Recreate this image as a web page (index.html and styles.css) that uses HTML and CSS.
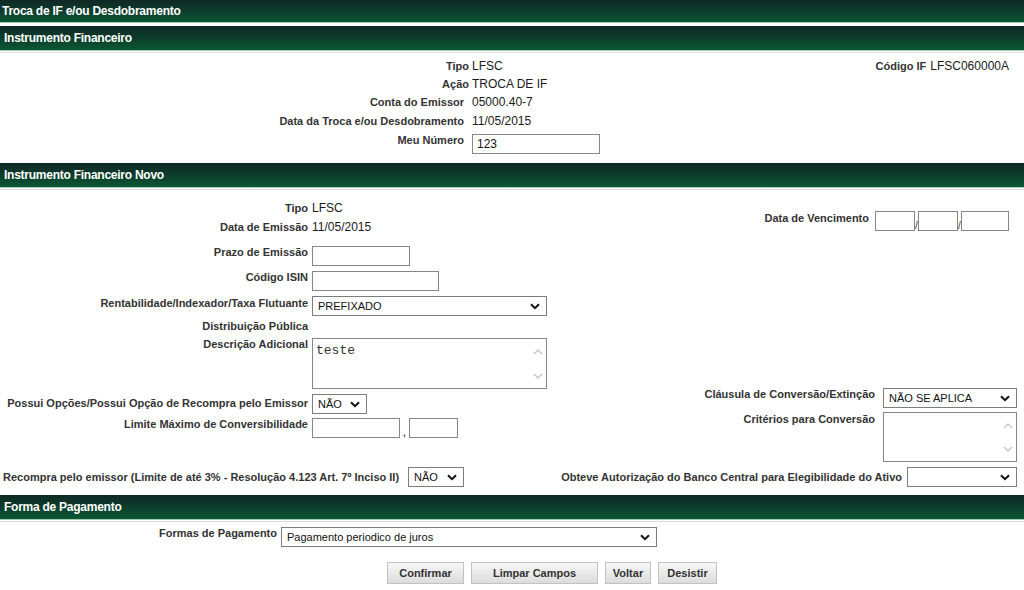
FILE: index.html
```html
<!DOCTYPE html>
<html lang="pt-BR">
<head>
<meta charset="utf-8">
<title>Troca de IF e/ou Desdobramento</title>
<link rel="stylesheet" href="styles.css">
</head>
<body>
<div class="title">Troca de IF e/ou Desdobramento</div>
<div class="bar">Instrumento Financeiro</div>
<section class="body body1">
  <div class="grid1">
    <div class="lbl lbl-tight">Tipo</div><div class="val">LFSC</div>
    <div class="lbl lbl-tight">Ação</div><div class="val">TROCA DE IF</div>
    <div class="lbl">Conta do Emissor</div><div class="val">05000.40-7</div>
    <div class="lbl">Data da Troca e/ou Desdobramento</div><div class="val">11/05/2015</div>
    <div class="lbl">Meu Número</div><div><input class="inp w-meu" value="123"></div>
  </div>
  <div class="codigo">
    <span class="lbl">Código IF</span><span class="val">LFSC060000A</span>
  </div>
</section>

<div class="bar">Instrumento Financeiro Novo</div>
<section class="body body2">
  <div class="cols">
    <div class="grid2">
      <div class="lbl">Tipo</div><div class="val">LFSC</div>
      <div class="lbl">Data de Emissão</div><div class="val">11/05/2015</div>
      <div class="lbl">Prazo de Emissão</div><div><input class="inp w-prazo"></div>
      <div class="lbl">Código ISIN</div><div><input class="inp w-isin"></div>
      <div class="lbl">Rentabilidade/Indexador/Taxa Flutuante</div>
      <div><div class="sel sel-m2 w-rent"><span>PREFIXADO</span><svg class="chev" viewBox="0 0 10 7"><path d="M1 1.2 L5 5.2 L9 1.2"/></svg></div></div>
      <div class="lbl">Distribuição Pública</div><div></div>
      <div class="lbl">Descrição Adicional</div>
      <div>
        <div class="tarea w-desc">
          <div class="tarea-text">teste</div>
          <div class="tarea-scroll">
            <svg class="sarrow" viewBox="0 0 10 6"><path d="M1 5 L5 1 L9 5"/></svg>
            <svg class="sarrow" viewBox="0 0 10 6"><path d="M1 1 L5 5 L9 1"/></svg>
          </div>
        </div>
      </div>
      <div class="lbl">Possui Opções/Possui Opção de Recompra pelo Emissor</div>
      <div><div class="sel w-nao"><span>NÃO</span><svg class="chev" viewBox="0 0 10 7"><path d="M1 1.2 L5 5.2 L9 1.2"/></svg></div></div>
      <div class="lbl">Limite Máximo de Conversibilidade</div>
      <div class="limite"><input class="inp w-lim1"><span class="comma">,</span><input class="inp w-lim2"></div>
    </div>

    <div class="right2">
      <div class="rrow venc">
        <span class="lbl lbl-r">Data de Vencimento</span>
        <div class="datebox">
          <input class="inp w-d1"><span class="slash">/</span><input class="inp w-d1"><span class="slash">/</span><input class="inp w-d3">
        </div>
      </div>
      <div class="rrow clausula">
        <span class="lbl lbl-r lbl-up">Cláusula de Conversão/Extinção</span>
        <div class="sel w-claus"><span>NÃO SE APLICA</span><svg class="chev" viewBox="0 0 10 7"><path d="M1 1.2 L5 5.2 L9 1.2"/></svg></div>
      </div>
      <div class="rrow criterios">
        <span class="lbl lbl-r">Critérios para Conversão</span>
        <div class="tarea w-crit">
          <div class="tarea-text"></div>
          <div class="tarea-scroll">
            <svg class="sarrow" viewBox="0 0 10 6"><path d="M1 5 L5 1 L9 5"/></svg>
            <svg class="sarrow" viewBox="0 0 10 6"><path d="M1 1 L5 5 L9 1"/></svg>
          </div>
        </div>
      </div>
    </div>
  </div>

  <div class="recompra">
    <div class="pair pair-left">
      <span class="lbl lbl-line">Recompra pelo emissor (Limite de até 3% - Resolução 4.123 Art. 7º Inciso II)</span>
      <div class="sel w-nao2"><span>NÃO</span><svg class="chev" viewBox="0 0 10 7"><path d="M1 1.2 L5 5.2 L9 1.2"/></svg></div>
    </div>
    <div class="pair pair-right">
      <span class="lbl lbl-line">Obteve Autorização do Banco Central para Elegibilidade do Ativo</span>
      <div class="sel w-obt"><span></span><svg class="chev" viewBox="0 0 10 7"><path d="M1 1.2 L5 5.2 L9 1.2"/></svg></div>
    </div>
  </div>
</section>

<div class="bar">Forma de Pagamento</div>
<section class="body body3">
  <div class="formas">
    <span class="lbl lbl-formas">Formas de Pagamento</span>
    <div class="sel w-formas"><span>Pagamento periodico de juros</span><svg class="chev" viewBox="0 0 10 7"><path d="M1 1.2 L5 5.2 L9 1.2"/></svg></div>
  </div>
  <div class="buttons">
    <button class="btn w-conf">Confirmar</button>
    <button class="btn w-limp">Limpar Campos</button>
    <button class="btn w-volt">Voltar</button>
    <button class="btn w-desi">Desistir</button>
  </div>
</section>
</body>
</html>
```

FILE: styles.css
```css
* { box-sizing: border-box; }

html, body {
  margin: 0;
  padding: 0;
  background: #ffffff;
}

body {
  width: 1024px;
  overflow: hidden;
  font-family: "Liberation Sans", Arial, sans-serif;
  color: #222;
}

/* ---------- header bars ---------- */
.title,
.bar {
  background: linear-gradient(#0f2925 0%, #0d3a2b 45%, #0a5834 100%);
  color: #ffffff;
  font-weight: bold;
  font-size: 12px;
  letter-spacing: -0.25px;
  white-space: nowrap;
  border-bottom: 1px solid #9fcbb0;
}

.title {
  height: 23px;
  line-height: 22px;
  padding-left: 2px;
  margin-bottom: 3px;
}

.bar {
  height: 25px;
  line-height: 24px;
  padding-left: 4px;
}

.body {
  margin-top: 1px;
  border-top: 1px solid #dadada;
}

/* ---------- text ---------- */
.lbl {
  font-size: 11px;
  font-weight: bold;
  color: #333;
  line-height: 18px;
  text-align: right;
  white-space: nowrap;
}

.val {
  font-size: 12px;
  line-height: 18px;
  color: #1a1a1a;
  white-space: nowrap;
}

/* ---------- controls ---------- */
.inp {
  display: block;
  height: 20px;
  border: 1px solid #858585;
  background: #fff;
  padding: 0 4px;
  margin: 3px 0 0 0;
  font-family: "Liberation Sans", Arial, sans-serif;
  font-size: 12px;
  color: #111;
  border-radius: 0;
  outline: none;
}

.sel {
  display: flex;
  align-items: center;
  justify-content: space-between;
  height: 20px;
  border: 1px solid #7d7d7d;
  background: #fff;
  padding: 0 6px 0 5px;
  font-size: 11px;
  color: #111;
  white-space: nowrap;
}

.sel-m2 { margin-top: 2px; }

.chev {
  width: 10px;
  height: 7px;
  flex: none;
}
.chev path {
  fill: none;
  stroke: #111;
  stroke-width: 2;
}

.tarea {
  display: flex;
  height: 51px;
  border: 1px solid #858585;
  background: #fff;
  margin-top: 3px;
}
.tarea-text {
  flex: 1;
  padding: 4px 3px;
  font-family: "Liberation Mono", "Courier New", monospace;
  font-size: 13px;
  line-height: 15px;
  color: #333;
}
.tarea-scroll {
  width: 17px;
  flex: none;
  display: flex;
  flex-direction: column;
  justify-content: space-between;
  align-items: center;
  padding: 10px 0 9px;
}
.sarrow {
  width: 10px;
  height: 6px;
}
.sarrow path {
  fill: none;
  stroke: #c4c4c4;
  stroke-width: 1.4;
}

/* ---------- section 1 ---------- */
.body1 {
  display: flex;
  padding: 4px 15px 9px 0;
}

.grid1 {
  display: grid;
  grid-template-columns: 469px auto;
  grid-template-rows: 18px 18px 19px 19px 23px;
  column-gap: 3px;
}
.grid1 .lbl { padding-right: 5px; }
.grid1 .lbl-tight { padding-right: 0; }

.w-meu { width: 128px; }

.codigo {
  margin-left: auto;
  display: flex;
  gap: 4px;
  align-items: flex-start;
}

/* ---------- section 2 ---------- */
.body2 {
  padding: 9px 7px 8px 3px;
}

.cols {
  display: flex;
  align-items: flex-start;
}

.grid2 {
  display: grid;
  grid-template-columns: 306px auto;
  grid-template-rows: 19px 25px 25px 26px 23px 18px 59px 21px 24px;
  column-gap: 3px;
  align-items: start;
}
.grid2 .lbl { padding-right: 1px; }

.w-prazo { width: 98px; }
.w-isin { width: 127px; }
.w-rent { width: 235px; }
.w-desc { width: 235px; }
.w-nao { width: 55px; }
.w-lim1 { width: 88px; }
.w-lim2 { width: 49px; }

.limite {
  display: flex;
  align-items: flex-start;
}
.comma {
  font-size: 12px;
  line-height: 18px;
  margin-top: 8px;
  width: 9px;
  text-align: center;
}

.right2 {
  flex: 1;
  display: flex;
  flex-direction: column;
  align-items: flex-end;
  padding-top: 12px;
}

.rrow {
  display: flex;
  align-items: flex-start;
}
.lbl-r { line-height: 14px; }
.lbl-up { margin-top: -1px; }

.venc {
  gap: 6px;
  padding-right: 8px;
}
.datebox {
  display: flex;
  align-items: flex-end;
}
.datebox .inp { margin-top: 0; }
.w-d1 { width: 40px; }
.w-d3 { width: 48px; }
.slash {
  width: 3px;
  font-size: 10px;
  line-height: 10px;
  color: #333;
  overflow: hidden;
}

.clausula {
  margin-top: 157px;
  gap: 8px;
}
.w-claus { width: 134px; }

.criterios {
  margin-top: 4px;
  gap: 8px;
}
.w-crit {
  width: 134px;
  height: 50px;
  margin-top: 0;
}

.recompra {
  display: flex;
  justify-content: space-between;
  margin-top: 5px;
}
.pair {
  display: flex;
  align-items: center;
}
.pair-left { gap: 9px; }
.pair-right { gap: 5px; }
.lbl-line { line-height: 20px; }
.w-nao2 { width: 56px; }
.w-obt { width: 110px; }

/* ---------- section 3 ---------- */
.body3 {
  padding: 5px 0 0 0;
}

.formas {
  display: grid;
  grid-template-columns: 277px auto;
  column-gap: 4px;
  align-items: start;
}
.lbl-formas { line-height: 12px; }
.w-formas { width: 376px; }

.buttons {
  display: flex;
  gap: 7px;
  margin-top: 15px;
  padding-left: 387px;
}

.btn {
  height: 22px;
  padding: 0;
  font-family: "Liberation Sans", Arial, sans-serif;
  font-size: 11px;
  font-weight: bold;
  color: #333;
  background: linear-gradient(#f7f7f7, #dcdcdc);
  border: 1px solid #c2c2c2;
  border-radius: 0;
}
.w-conf { width: 77px; }
.w-limp { width: 127px; }
.w-volt { width: 46px; }
.w-desi { width: 59px; }
```
